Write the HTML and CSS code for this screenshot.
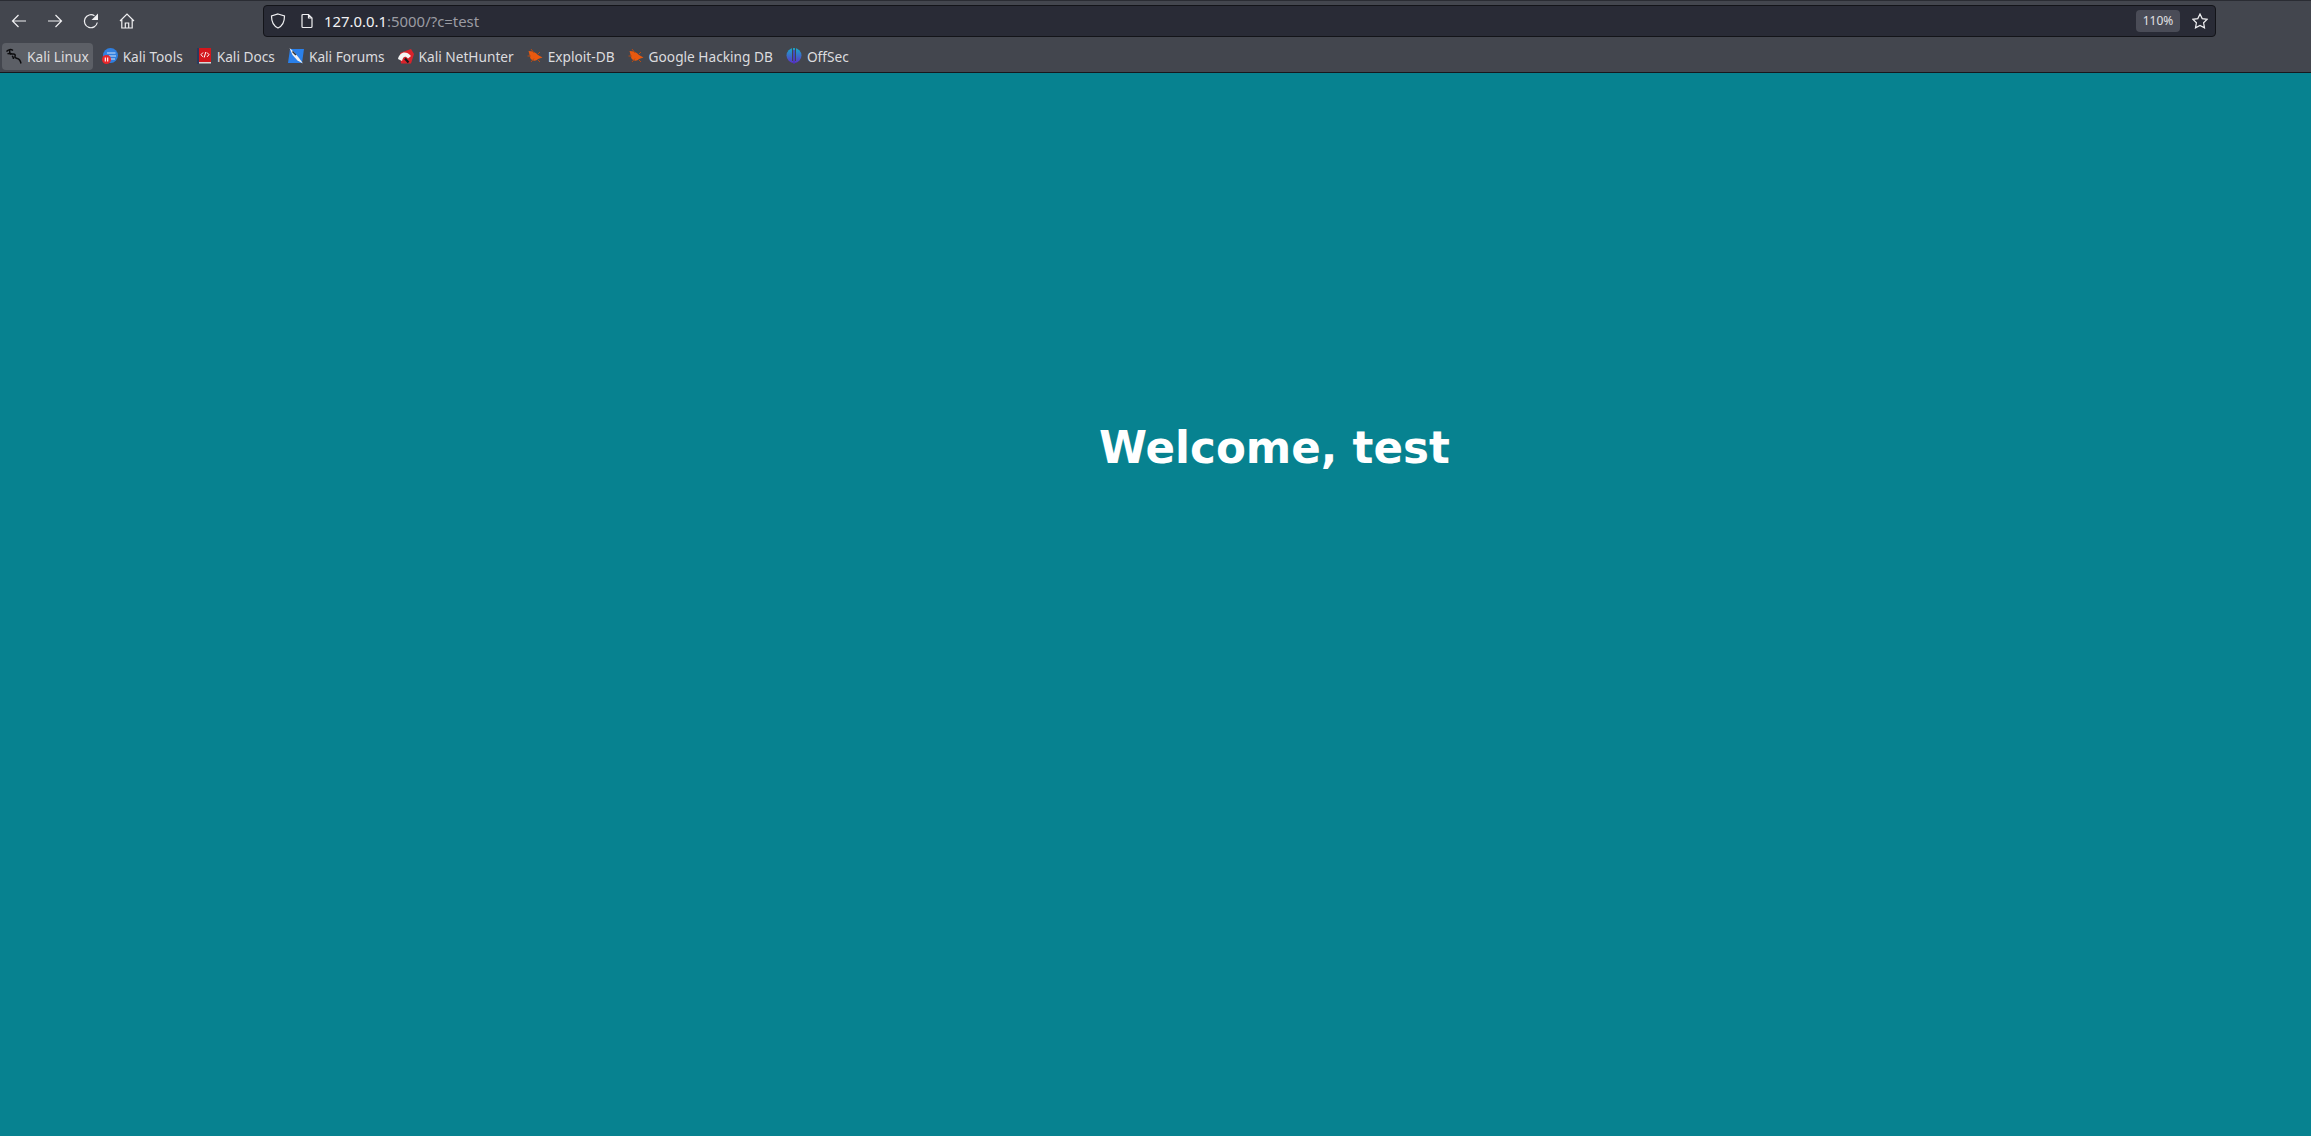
FILE: index.html
```html
<!DOCTYPE html>
<html>
<head lang="en">
    <meta charset="UTF-8">
    <title>Welcome</title>
    <link rel="stylesheet" href="styles.css">
</head>
<body>
    <div class="browser">
        <div class="toolbar">
            <div class="nav">
                <svg class="nav-icon" viewBox="0 0 16 16"><path d="M15 8H1.500M7.500 2L1.500 8l6 6"/></svg>
                <svg class="nav-icon" viewBox="0 0 16 16"><path d="M1 8H14.500M8.500 2L14.500 8l-6 6"/></svg>
                <svg class="nav-icon" viewBox="0 0 16 16"><path d="M14.300 9.500A6.500 6.500 0 1 1 11.500 2.800"/><path class="solid" d="M15 .5v6.500H8.500z"/></svg>
                <svg class="nav-icon" viewBox="0 0 16 16"><path d="M1 8L8 1 15 8M2.800 6.500V15H13.200V6.500M6.300 15V10H9.700V15"/></svg>
            </div>
            <div class="urlbar">
                <svg class="url-icon" viewBox="0 0 16 16"><path d="M8 1L14.500 3C14.500 9 12.500 13 8 15 3.500 13 1.500 9 1.500 3z"/></svg>
                <svg class="url-icon page-icon" viewBox="0 0 16 16"><path d="M3 2.500Q3 1.500 4 1.500H9.500L13 5V13.500Q13 14.500 12 14.500H4Q3 14.500 3 13.500zM9.500 1.500V5H13"/></svg>
                <div class="url"><span class="host">127.0.0.1</span>:5000/?c=test</div>
                <div class="zoom-level">110%</div>
                <svg class="url-icon star" viewBox="0 0 16 16"><path d="M8 1l2.200 4.600 5 .7-3.600 3.500.9 5L8 12.400l-4.500 2.400.9-5L.8 6.300l5-.7z"/></svg>
            </div>
        </div>
        <div class="bookmarks">
            <a class="bookmark active">
                <svg class="favicon" viewBox="0 0 16 16"><path class="dragon" d="M.5 3.500C2 1.500 5 1 7 2.500M4 2.500C3 4.500 4 6 6.500 6 9 5.500 9.500 7 9 8.500 8.500 10 10 10 11.500 10.500 13.500 11 14.500 13 15 15.500M1.500 6C3 5 4 5.500 5 6.500M6 8C7 8.500 7.500 9.500 7.500 11"/></svg>
                Kali Linux
            </a>
            <a class="bookmark">
                <svg class="favicon" viewBox="0 0 16 16"><circle cx="8.500" cy="7.500" r="7.500" fill="#2f7fe0"/><path d="M5 5h8.500M7 8h7M8 11h5" stroke="#cfe3fa" stroke-width="1.200"/><circle cx="4.500" cy="11.500" r="4.500" fill="#e8262a"/><path d="M3.300 9.500v4M5.700 9.500v4" stroke="#fff" stroke-width="1.100"/></svg>
                Kali Tools
            </a>
            <a class="bookmark">
                <svg class="favicon" viewBox="0 0 16 16"><rect x="1" y="0" width="2.500" height="16" fill="#2a3a5c"/><rect x="3" y="0" width="12" height="14" fill="#d4161c"/><rect x="3" y="14" width="12" height="1.500" fill="#d8d8d8"/><path d="M7 4.500L5 6.700 7 8.900M11 4.500l2 2.200-2 2.200M9.800 4L8.200 9.500" stroke="#fff" stroke-width="1" fill="none"/></svg>
                Kali Docs
            </a>
            <a class="bookmark">
                <svg class="favicon" viewBox="0 0 16 16"><path d="M2 1H16L14 15H0z" fill="#2a80ea"/><path d="M1.500 0L6.500 4.500 11 10 15 15.500 9.500 12.500 4.500 7z" fill="#f2f2f2"/><path d="M4.500 3.500L8 7" stroke="#30343c" stroke-width="1.500"/></svg>
                Kali Forums
            </a>
            <a class="bookmark">
                <svg class="favicon" viewBox="0 0 16 16"><path d="M2 5L13 1 16 6 13 15.500H3z" fill="#d9232b"/><path d="M0 11C1.500 4 8 2 13 8L10 10.500C7.500 7.500 5 8.500 4 13z" fill="#f4f4f4"/><path d="M7 10.500l3.500 4" stroke="#17181c" stroke-width="2.200"/></svg>
                Kali NetHunter
            </a>
            <a class="bookmark">
                <svg class="favicon" viewBox="0 0 16 16"><use href="#bug"/></svg>
                Exploit-DB
            </a>
            <a class="bookmark">
                <svg class="favicon" viewBox="0 0 16 16"><use href="#bug"/></svg>
                Google Hacking DB
            </a>
            <a class="bookmark">
                <svg class="favicon" viewBox="0 0 16 16"><defs><linearGradient id="off" x1="0" y1="0" x2="0" y2="1"><stop offset="0" stop-color="#19a9c9"/><stop offset="1" stop-color="#5a35c8"/></linearGradient></defs><circle cx="8" cy="7.500" r="7.500" fill="url(#off)"/><path d="M6.500 0v13M9.500 0v13" stroke="#42454d" stroke-width="1"/><path d="M8 2v14" stroke="#4a30c0" stroke-width="1.200"/></svg>
                OffSec
            </a>
        </div>
    </div>
    <main class="page">
        <h1>Welcome, test</h1>
    </main>

    <svg class="sprites" width="0" height="0">
        <symbol id="bug" viewBox="0 0 16 16">
            <path d="M1.500 3C5 3 9 4.500 11 7L15.500 9.500 11 11C9 13.500 5.500 13 3.500 10.500 2.500 8 2.500 5.500 1.500 3z" fill="#e8590f"/>
            <path d="M4 1L7 5M.5 8h3.500M4 14l3-3.500M11 6l2-2M11 12l2 2" stroke="#b84a12" stroke-width="1"/>
        </symbol>
    </svg>
</body>
</html>
```

FILE: styles.css
```css
* {
    margin: 0;
    padding: 0;
    box-sizing: border-box;
}
html, body {
    height: 100%;
}
body {
    display: flex;
    flex-direction: column;
    background: #078290;
    overflow: hidden;
}
.browser {
    flex: none;
    background: #43464e;
    border-top: 1px solid #2a2c33;
    border-bottom: 1px solid #17181d;
    font-family: "Noto Sans", "Open Sans", sans-serif;
    color: #dcdcdf;
}
.toolbar {
    height: 37px;
    display: flex;
    align-items: center;
    padding-top: 3px;
}
.nav {
    width: 263px;
    display: flex;
    align-items: center;
    gap: 20px;
    padding-left: 11px;
}
.nav-icon {
    width: 16px;
    height: 16px;
    fill: none;
    stroke: #f0f0f2;
    stroke-width: 1.200;
}
.nav-icon .solid {
    fill: #f0f0f2;
    stroke: none;
}
.urlbar {
    width: 1953px;
    height: 32px;
    display: flex;
    align-items: center;
    background: #292b36;
    border: 1px solid #131419;
    border-radius: 4px;
    padding-left: 6px;
    padding-right: 7px;
}
.url-icon {
    width: 16px;
    height: 16px;
    fill: none;
    stroke: #f0f0f2;
    stroke-width: 1.200;
}
.page-icon {
    margin-left: 13px;
}
.url {
    flex: 1;
    margin-left: 9px;
    font-size: 14.900px;
    color: #9b9ca3;
}
.host {
    color: #f2f2f4;
}
.zoom-level {
    width: 44px;
    height: 22px;
    line-height: 22px;
    margin-right: 12px;
    text-align: center;
    font-size: 12px;
    background: #4a4c57;
    border-radius: 4px;
    color: #e0e0e3;
}
.bookmarks {
    height: 34px;
    display: flex;
    align-items: center;
    gap: 5px;
    padding-left: 2px;
    padding-top: 2px;
}
.bookmark {
    height: 27px;
    display: flex;
    align-items: center;
    gap: 5px;
    padding: 0 4px;
    border-radius: 4px;
    font-size: 13.700px;
    white-space: nowrap;
}
.bookmark.active {
    background: #5c5f66;
}
.favicon {
    width: 16px;
    height: 16px;
    flex: none;
}
.dragon {
    fill: none;
    stroke: #0c0c0e;
    stroke-width: 1.500;
}
.sprites {
    position: absolute;
}
.page {
    flex: 1;
    padding: 349px 0 0 1099px;
}
h1 {
    font-family: "DejaVu Sans", sans-serif;
    font-size: 43.600px;
    font-weight: bold;
    line-height: 52px;
    color: #fff;
}
```
